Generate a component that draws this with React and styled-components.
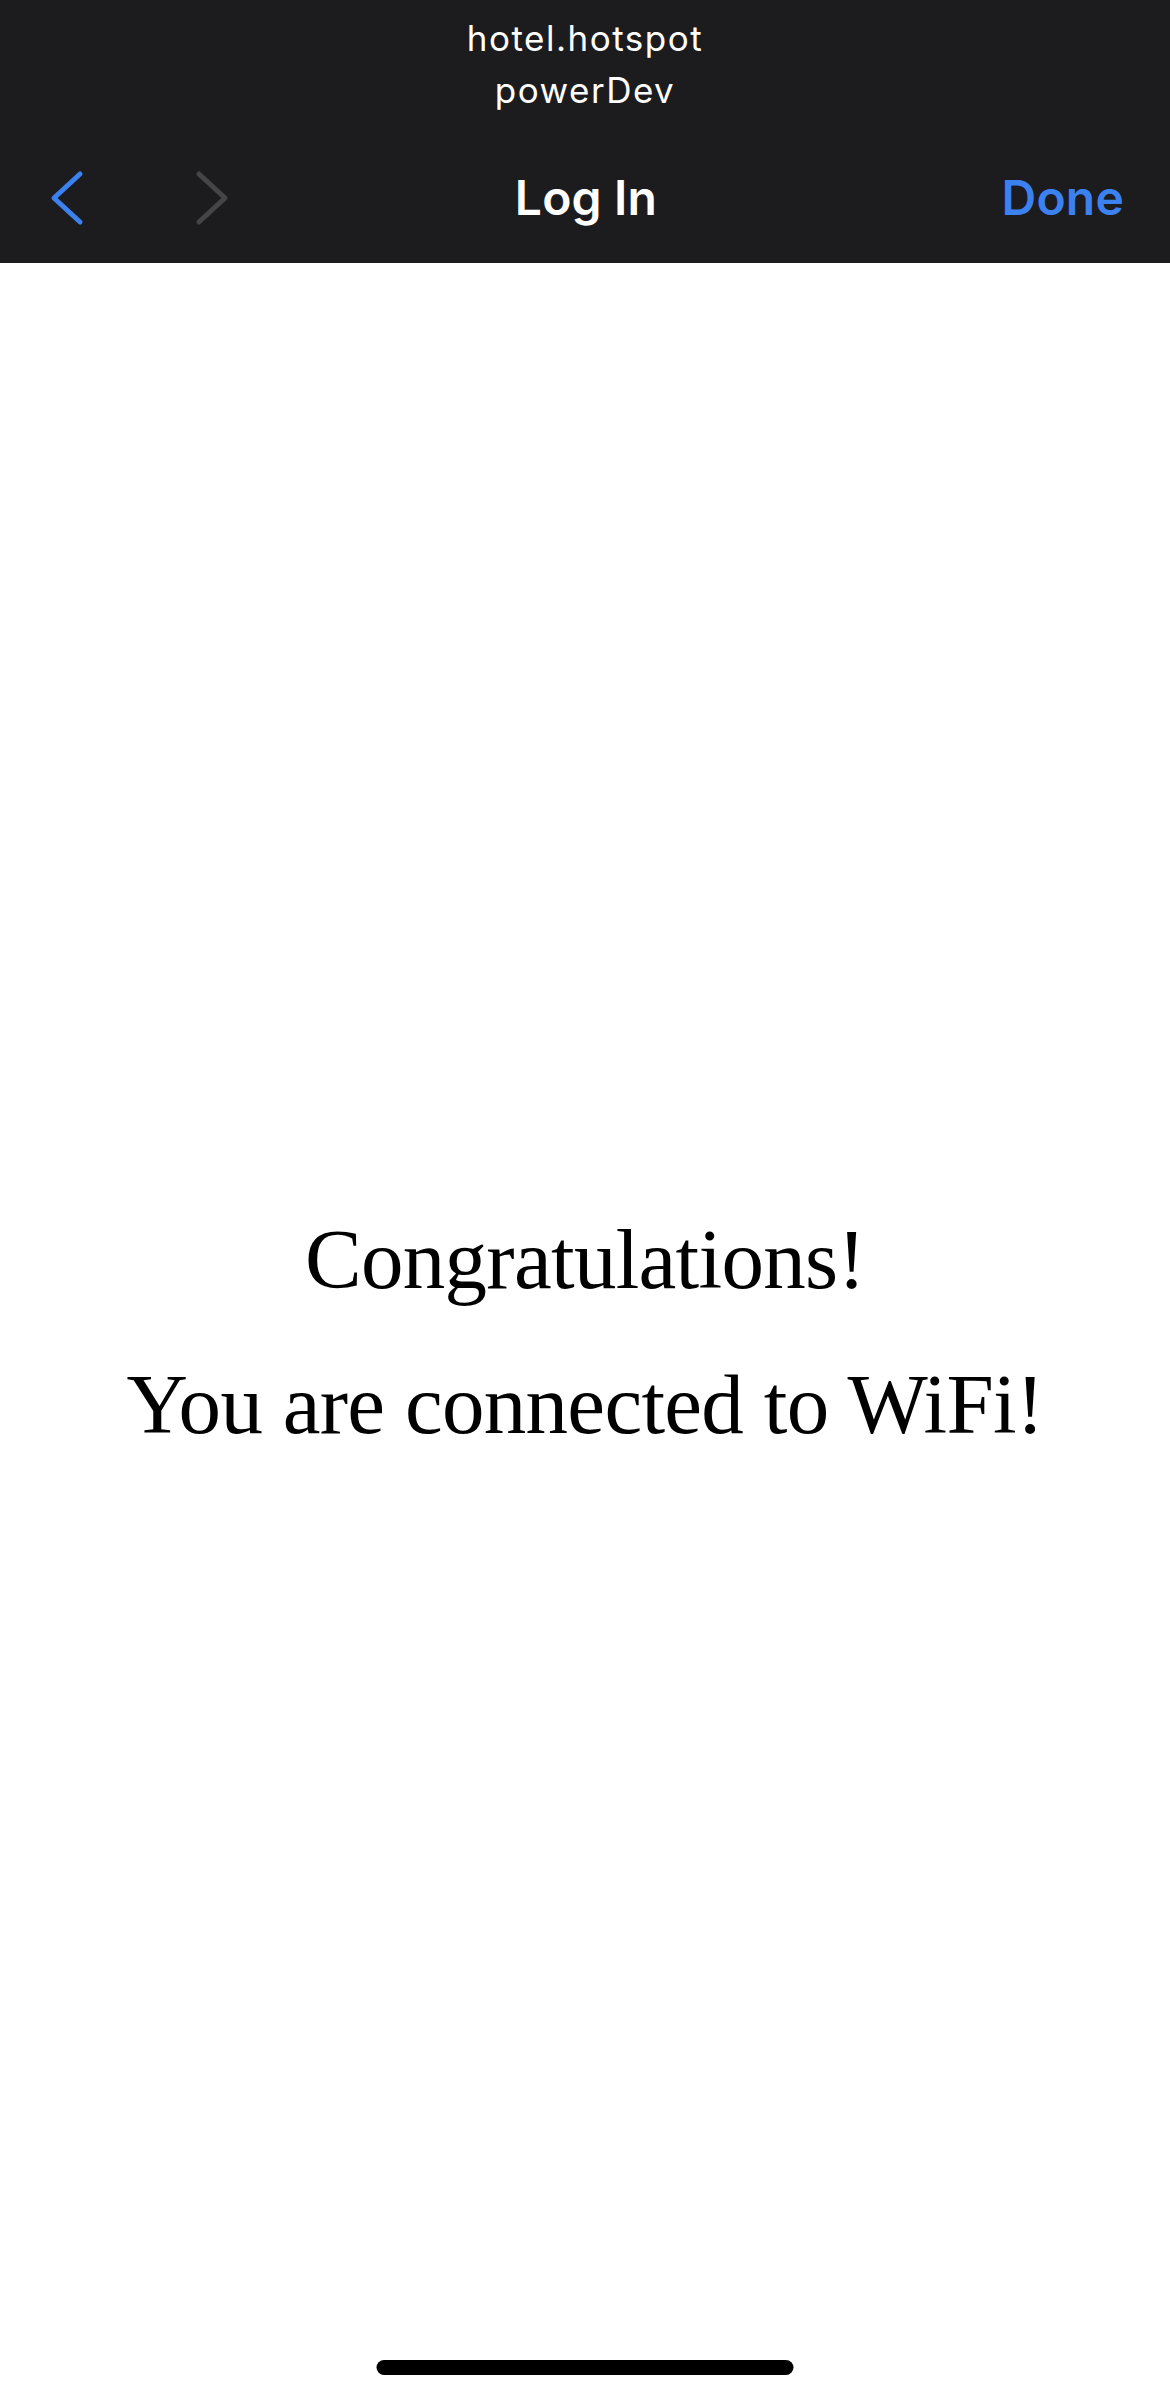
import React from "react";
import styled, { createGlobalStyle } from "styled-components";

const GlobalStyle = createGlobalStyle`
  html, body {
    margin: 0;
    padding: 0;
    background: #ffffff;
  }
  #root {
    min-height: 100vh;
  }
`;

const Page = styled.div`
  position: relative;
  display: flex;
  flex-direction: column;
  min-height: 100vh;
  width: 100%;
  background: #ffffff;
`;

const Header = styled.header`
  display: flex;
  flex-direction: column;
  background: #1c1c1e;
  height: 263px;
  box-sizing: border-box;
  padding-top: 12px;
  font-family: Inter, "Noto Sans", Roboto, sans-serif;
`;

const HostLine = styled.div`
  color: #ffffff;
  font-size: 35px;
  line-height: 52px;
  letter-spacing: 1.5px;
  text-align: center;
  font-weight: 400;
`;

const NavBar = styled.nav`
  display: grid;
  grid-template-columns: 1fr auto 1fr;
  align-items: center;
  height: 96px;
  margin-top: 34px;
  padding: 0 46px 0 48px;
`;

const NavGroup = styled.div`
  display: flex;
  align-items: center;
  gap: 107px;
`;

const Chevron = styled.svg`
  display: block;
  width: 38px;
  height: 56px;
  fill: none;
  stroke: ${(p) => (p.$enabled ? "#3b82f0" : "#454547")};
  stroke-width: 5;
  stroke-linecap: round;
  stroke-linejoin: round;
`;

const Title = styled.h1`
  margin: 0;
  color: #ffffff;
  font-size: 48px;
  line-height: 60px;
  font-weight: 600;
  letter-spacing: 0.2px;
`;

const DoneButton = styled.button`
  justify-self: end;
  background: none;
  border: 0;
  padding: 0;
  color: #3b82f0;
  font-family: inherit;
  font-size: 48px;
  line-height: 60px;
  font-weight: 600;
  letter-spacing: 0.2px;
  cursor: pointer;
`;

const Main = styled.main`
  flex: 1;
  display: flex;
  flex-direction: column;
  align-items: center;
  justify-content: center;
  gap: 45px;
`;

const Message = styled.p`
  margin: 0;
  font-family: "Liberation Serif", "Times New Roman", serif;
  font-size: 85px;
  line-height: 100px;
  letter-spacing: -0.7px;
  color: #000000;
  text-align: center;
`;

const HomeIndicator = styled.div`
  position: absolute;
  left: 50%;
  bottom: 24px;
  transform: translateX(-50%);
  width: 417px;
  height: 15px;
  border-radius: 8px;
  background: #000000;
`;

export default function App() {
  return (
    <>
      <GlobalStyle />
      <Page>
        <Header>
          <HostLine>hotel.hotspot</HostLine>
          <HostLine>powerDev</HostLine>
          <NavBar>
            <NavGroup>
              <Chevron $enabled viewBox="0 0 38 56" aria-label="Back">
                <path d="M32 4 L6 28 L32 52" />
              </Chevron>
              <Chevron viewBox="0 0 38 56" aria-label="Forward">
                <path d="M6 4 L32 28 L6 52" />
              </Chevron>
            </NavGroup>
            <Title>Log In</Title>
            <DoneButton>Done</DoneButton>
          </NavBar>
        </Header>
        <Main>
          <Message>Congratulations!</Message>
          <Message>You are connected to WiFi!</Message>
        </Main>
        <HomeIndicator />
      </Page>
    </>
  );
}
